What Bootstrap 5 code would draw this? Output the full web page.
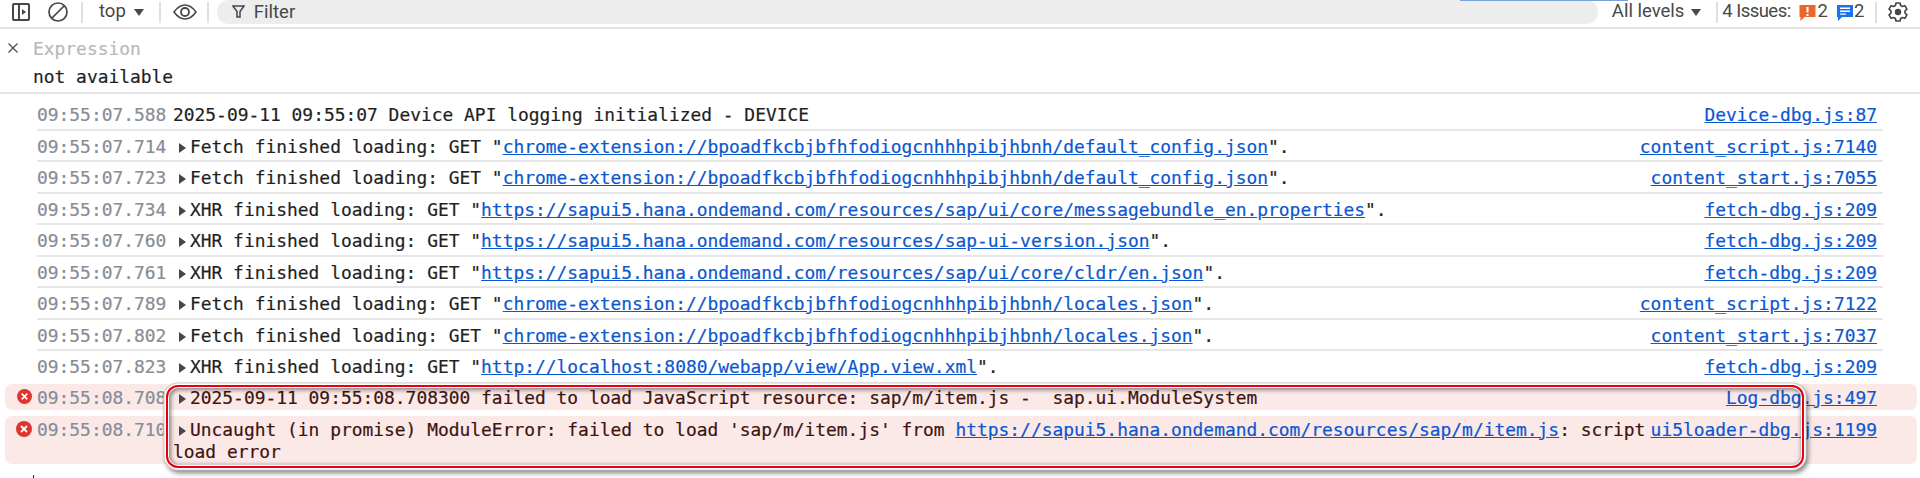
<!DOCTYPE html>
<html><head><meta charset="utf-8">
<link rel="stylesheet" href="https://cdn.jsdelivr.net/npm/bootstrap@5.3.0/dist/css/bootstrap.min.css">
<style>
html,body{height:478px;overflow:hidden;background:#fff}
body{position:relative;font-family:"DejaVu Sans Mono",monospace;font-size:17.92px;color:#1f1f1f;-webkit-text-stroke:.2px}
.tb{height:29px;border-bottom:2px solid #e4e4e4;font-family:Roboto,sans-serif;font-size:18.5px;color:#474747;overflow:hidden;white-space:nowrap;padding-bottom:3px;position:relative;-webkit-text-stroke:0}
.tb>*{flex:none}
.sep{width:2px;height:21px;background:#e0e0e0}
.filt{background:#ededed;border-radius:14px;height:24px;width:1381px;position:relative;color:#474747;padding-left:37px;line-height:24px}
.blueline{position:absolute;left:1460px;top:0;width:168px;height:1px;background:#7aa3dc}
.tbi{display:block}
.issues{letter-spacing:-.55px}
.exprbox{height:65px;border-bottom:2px solid #e4e4e4;padding-left:33px;position:relative;line-height:28px;padding-top:6px}
.closex{position:absolute;left:8px;top:14px}
.expr{color:#b9b9b9;line-height:28px}
.logwrap{padding-top:5px}
.logrow{height:31.5px;margin-left:37px;margin-right:37px;padding-right:6px;border-bottom:2px solid #e6e6e6;line-height:31px;display:flex;white-space:nowrap}
.ts{color:#858d96;width:129px;flex:none;margin-right:7px}
.tri{width:0;height:0;border-left:7px solid #474747;border-top:5px solid transparent;border-bottom:5px solid transparent;display:inline-block;margin:0 4px 0 6px;vertical-align:0}
.msg{flex:1 1 auto;min-width:0}
.src{margin-left:auto;flex:none;white-space:nowrap}
a{color:#0b57d0;text-decoration:underline}
.errrow{background:#fbe9e8;border-radius:7px;margin:0 3px 0 5px;padding-left:32px;padding-right:40px;display:flex;position:relative;color:#3e1410;white-space:nowrap}
.e1{height:26px;line-height:27px;margin-top:1.5px}
.e2{height:48px;line-height:22px;padding-top:2.5px;margin-top:6px}
.e2 .msg{white-space:normal}
.ico-err{position:absolute;top:5px}
.hilite{position:absolute;left:166px;top:385px;width:1638px;height:83px;border:2px solid #e8000f;border-radius:12px;box-shadow:0 0 0 1.5px #fff,0 0 0 2.5px #ccc,2px 3px 5px 2px rgba(0,0,0,.5),inset 0 0 0 1px #fff,inset 1px 1px 4px 2px rgba(0,0,0,.45);pointer-events:none}
.stub{position:absolute;left:33px;top:475px;width:1px;height:3px;background:#222}
</style></head><body>

<div class="tb d-flex align-items-center">
 <svg class="tbi" style="margin-left:12px" width="18" height="18" viewBox="0 0 18 18"><rect x="1" y="1" width="16" height="16" rx="1" fill="none" stroke="#474747" stroke-width="2"/><rect x="6" y="1" width="2" height="16" fill="#474747"/><path d="M10 6l4 3-4 3z" fill="#474747"/></svg>
 <svg class="tbi" style="margin-left:18px" width="20" height="20" viewBox="0 0 20 20"><circle cx="10" cy="10" r="9" fill="none" stroke="#474747" stroke-width="1.700"/><path d="M4 16L16 4" stroke="#474747" stroke-width="1.700"/></svg>
 <span class="sep" style="margin-left:13px"></span>
 <span style="margin-left:16px">top</span>
 <svg class="tbi" style="margin-left:8px" width="10" height="7" viewBox="0 0 10 7"><path d="M0 0h10L5 7z" fill="#474747"/></svg>
 <span class="sep" style="margin-left:15px"></span>
 <svg class="tbi" style="margin-left:12px" width="24" height="16" viewBox="0 0 24 16"><path d="M1 8C5 2.500 8 1 12 1s7 1.500 11 7c-4 5.500-7 7-11 7S5 13.500 1 8z" fill="none" stroke="#474747" stroke-width="1.600"/><circle cx="12" cy="8" r="4" fill="none" stroke="#474747" stroke-width="1.800"/></svg>
 <span class="sep" style="margin-left:10px"></span>
 <div class="filt" style="margin-left:8px">
  <svg class="position-absolute" style="left:15px;top:5px" width="13" height="13" viewBox="0 0 13 13"><path d="M1 1h11L8 6.500V12H5V6.500z" fill="none" stroke="#474747" stroke-width="1.500"/></svg>Filter</div>
 <span style="margin-left:14px">All levels</span>
 <svg class="tbi" style="margin-left:7px" width="10" height="7" viewBox="0 0 10 7"><path d="M0 0h10L5 7z" fill="#474747"/></svg>
 <span class="sep" style="margin-left:15px"></span>
 <span class="issues" style="margin-left:4px">4 Issues:</span>
 <svg class="tbi" style="margin-left:8px" width="17" height="17" viewBox="0 0 16 17"><path d="M0 1h16v12H5l-4 4v-4H0z" fill="#e9662c"/><rect x="7" y="3" width="2" height="5.500" fill="#fff"/><rect x="7" y="10" width="2" height="2" fill="#fff"/></svg>
 <span style="margin-left:2px">2</span>
 <svg class="tbi" style="margin-left:9px" width="16" height="17" viewBox="0 0 16 17"><path d="M0 1h16v12H5l-4 4v-4H0z" fill="#1a73e8"/><rect x="3" y="3.500" width="10" height="1.500" fill="#fff"/><rect x="3" y="6.500" width="10" height="1.500" fill="#fff"/><rect x="3" y="9.500" width="6" height="1.200" fill="#fff"/></svg>
 <span style="margin-left:1px">2</span>
 <span class="sep" style="margin-left:11px"></span>
 <svg class="tbi" style="margin-left:11px" width="20" height="20" viewBox="0 0 20 20"><path d="M8 1h4l.6 2.500 1.800 1 2.500-.8 2 3.500-1.900 1.800v2l1.900 1.800-2 3.500-2.500-.8-1.800 1L12 19H8l-.6-2.500-1.800-1-2.500.8-2-3.500L3 11V9L1.100 7.200l2-3.500 2.500.8 1.800-1z" fill="none" stroke="#474747" stroke-width="1.700" stroke-linejoin="round"/><circle cx="10" cy="10" r="3.200" fill="#474747"/></svg>
 <span class="blueline"></span>
</div>

<div class="exprbox">
 <svg class="closex" width="10" height="10" viewBox="0 0 10 10"><path d="M.5.500l9 9M9.500.500l-9 9" stroke="#474747" stroke-width="1.200"/></svg>
 <div class="expr">Expression</div>
 <div>not available</div>
</div>

<div class="logwrap">
 <div class="logrow"><span class="ts">09:55:07.588</span><span class="msg">2025-09-11 09:55:07 Device API logging initialized - DEVICE</span><a class="src" href="#">Device-dbg.js:87</a></div>
 <div class="logrow"><span class="ts">09:55:07.714</span><span class="msg"><i class="tri"></i>Fetch finished loading: GET "<a href="#">chrome-extension://bpoadfkcbjbfhfodiogcnhhhpibjhbnh/default_config.json</a>".</span><a class="src" href="#">content_script.js:7140</a></div>
 <div class="logrow"><span class="ts">09:55:07.723</span><span class="msg"><i class="tri"></i>Fetch finished loading: GET "<a href="#">chrome-extension://bpoadfkcbjbfhfodiogcnhhhpibjhbnh/default_config.json</a>".</span><a class="src" href="#">content_start.js:7055</a></div>
 <div class="logrow"><span class="ts">09:55:07.734</span><span class="msg"><i class="tri"></i>XHR finished loading: GET "<a href="#">https://sapui5.hana.ondemand.com/resources/sap/ui/core/messagebundle_en.properties</a>".</span><a class="src" href="#">fetch-dbg.js:209</a></div>
 <div class="logrow"><span class="ts">09:55:07.760</span><span class="msg"><i class="tri"></i>XHR finished loading: GET "<a href="#">https://sapui5.hana.ondemand.com/resources/sap-ui-version.json</a>".</span><a class="src" href="#">fetch-dbg.js:209</a></div>
 <div class="logrow"><span class="ts">09:55:07.761</span><span class="msg"><i class="tri"></i>XHR finished loading: GET "<a href="#">https://sapui5.hana.ondemand.com/resources/sap/ui/core/cldr/en.json</a>".</span><a class="src" href="#">fetch-dbg.js:209</a></div>
 <div class="logrow"><span class="ts">09:55:07.789</span><span class="msg"><i class="tri"></i>Fetch finished loading: GET "<a href="#">chrome-extension://bpoadfkcbjbfhfodiogcnhhhpibjhbnh/locales.json</a>".</span><a class="src" href="#">content_script.js:7122</a></div>
 <div class="logrow"><span class="ts">09:55:07.802</span><span class="msg"><i class="tri"></i>Fetch finished loading: GET "<a href="#">chrome-extension://bpoadfkcbjbfhfodiogcnhhhpibjhbnh/locales.json</a>".</span><a class="src" href="#">content_start.js:7037</a></div>
 <div class="logrow" style="border-bottom:0"><span class="ts">09:55:07.823</span><span class="msg"><i class="tri"></i>XHR finished loading: GET "<a href="#">http://localhost:8080/webapp/view/App.view.xml</a>".</span><a class="src" href="#">fetch-dbg.js:209</a></div>
 <div class="errrow e1">
  <svg class="ico-err" style="left:12px" width="15" height="15" viewBox="0 0 16 16"><circle cx="8" cy="8" r="8" fill="#dc362e"/><path d="M5 5l6 6M11 5l-6 6" stroke="#fff" stroke-width="1.800"/></svg>
  <span class="ts">09:55:08.708</span><span class="msg"><i class="tri"></i>2025-09-11 09:55:08.708300 failed to load JavaScript resource: sap/m/item.js -&nbsp; sap.ui.ModuleSystem</span><a class="src" href="#">Log-dbg.js:497</a>
 </div>
 <div class="errrow e2">
  <svg class="ico-err" style="left:11px" width="16" height="16" viewBox="0 0 16 16"><circle cx="8" cy="8" r="8" fill="#dc362e"/><path d="M5 5l6 6M11 5l-6 6" stroke="#fff" stroke-width="1.800"/></svg>
  <span class="ts">09:55:08.710</span><span class="msg"><i class="tri"></i>Uncaught (in promise) ModuleError: failed to load 'sap/m/item.js' from <a href="#">https://sapui5.hana.ondemand.com/resources/sap/m/item.js</a>: script load error</span><a class="src" href="#">ui5loader-dbg.js:1199</a>
 </div>
</div>
<div class="hilite"></div>
<div class="stub"></div>
</body></html>
